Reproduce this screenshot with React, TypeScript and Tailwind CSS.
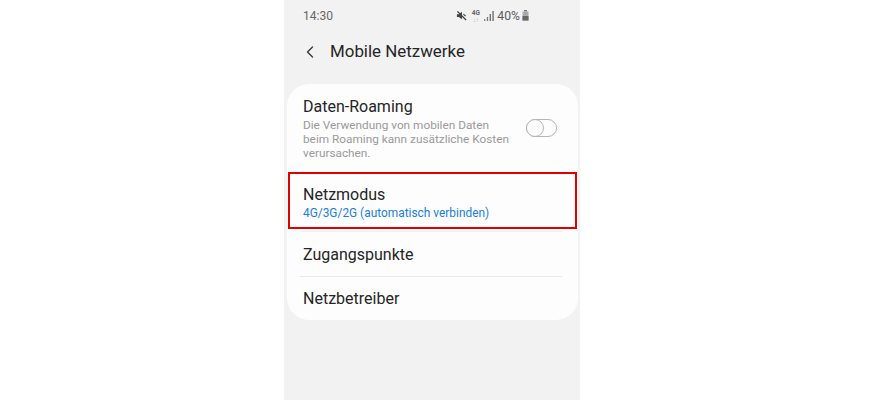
import { ChevronLeft } from "lucide-react";

const StatusIcons = () => (
  <div className="flex items-center text-[#5c5c5c]">
    <svg width="11" height="11" viewBox="0 0 12 12" className="mr-[4px]">
      <path d="M1 4.5h2L6.5 2v8L3 7.5H1z" fill="#444444" />
      <path d="M1.5 1.5l9.5 9.5" stroke="#444444" strokeWidth="1.5" />
      <path d="M8 4.5l2.5 2" stroke="#444444" strokeWidth="1.2" />
    </svg>
    <div className="w-[9px] flex flex-col items-center mr-[4px]">
      <span className="text-[6.5px] font-bold text-[#666666] leading-[7px]">4G</span>
      <span className="text-[6px] text-[#aaaaaa] leading-[5px]">↓↑</span>
    </div>
    <svg width="10" height="10" viewBox="0 0 10 10" className="mr-[3px]">
      <rect x="0" y="8" width="1.3" height="2" fill="#888888" />
      <rect x="2.8" y="6" width="1.3" height="4" fill="#777777" />
      <rect x="5.6" y="3" width="1.3" height="7" fill="#666666" />
      <rect x="8.4" y="0" width="1.3" height="10" fill="#666666" />
    </svg>
    <span className="text-[12.2px] leading-none mr-[2px]">40%</span>
    <svg width="7" height="11" viewBox="0 0 7 11">
      <rect x="2" y="0" width="3" height="1.5" fill="#777777" />
      <rect x="0.5" y="1.5" width="6" height="9" fill="#aaaaaa" />
      <rect x="0.5" y="6" width="6" height="4.5" fill="#666666" />
    </svg>
  </div>
);

export default function App() {
  return (
    <div className="w-[879px] h-[400px] bg-white pl-[284px] overflow-hidden font-['Roboto',sans-serif]">
      <div className="w-[296px] h-[400px] bg-[#f2f2f2] flex flex-col">
        <div className="h-[32px] pl-[19px] pr-[51px] flex items-center justify-between">
          <span className="text-[12px] text-[#666666]">14:30</span>
          <StatusIcons />
        </div>
        <div className="h-[38px] flex items-center pl-[16px] pt-[1px]">
          <ChevronLeft size={20} strokeWidth={1.5} className="text-[#333333]" />
          <span className="ml-[10px] text-[16.9px] text-[#252525]">Mobile Netzwerke</span>
        </div>
        <div className="mt-[14px] ml-[3px] mr-[2px] h-[236px] rounded-[22px] bg-[#fdfdfd] flex flex-col">
          <div className="h-[88px] pl-[16px] pt-[12px] pr-[21px] flex items-center justify-between">
            <div className="flex flex-col self-start">
              <span className="text-[16px] leading-[22px] text-[#252525]">Daten-Roaming</span>
              <span className="w-[207px] text-[11.8px] leading-[14px] text-[#9a9a9a]">
                Die Verwendung von mobilen Daten beim Roaming kann zusätzliche Kosten verursachen.
              </span>
            </div>
            <div className="relative w-[31px] h-[18px] rounded-full border border-[#b5b5b5] mt-[-13px]">
              <div className="absolute left-[-1px] top-[-1px] w-[18px] h-[18px] rounded-full border border-[#b5b5b5] bg-[#fdfdfd]" />
            </div>
          </div>
          <div className="h-[57px] mx-[1px] pl-[13px] pt-[2px] border-2 border-[#e00000] flex flex-col justify-center">
            <span className="text-[16px] leading-[22px] text-[#252525]">Netzmodus</span>
            <span className="text-[11.9px] leading-[14px] text-[#1a7fdc]">4G/3G/2G (automatisch verbinden)</span>
          </div>
          <div className="h-[46px] mt-[2px] ml-[13px] mr-[16px] pt-[1px] flex items-center border-t border-b border-t-[#f0f0f0] border-b-[#e8e8e8]">
            <span className="text-[16px] text-[#252525] ml-[3px]">Zugangspunkte</span>
          </div>
          <div className="flex-1 ml-[13px] mr-[16px] flex items-center">
            <span className="text-[16px] text-[#252525] ml-[3px]">Netzbetreiber</span>
          </div>
        </div>
      </div>
    </div>
  );
}
